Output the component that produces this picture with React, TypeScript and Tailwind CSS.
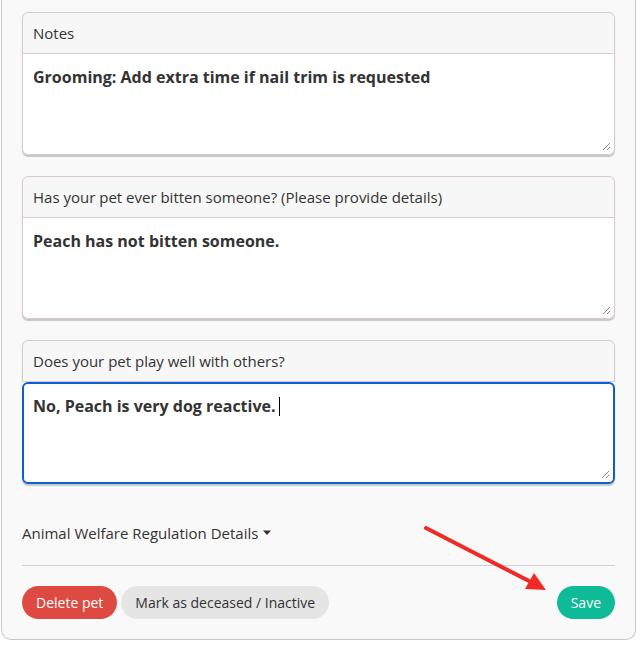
import React from "react";

type NoteFieldTypes = {
  label: string;
  value: string;
  focused?: boolean;
};

const ResizeGrip = () => (
  <svg width="9" height="9" viewBox="0 0 9 9" className="absolute bottom-[3px] right-[3px]">
    <path d="M1 8 L8 1 M5 8 L8 5" stroke="#8a8a8a" strokeWidth="1" />
  </svg>
);

const NoteField = ({ label, value, focused }: NoteFieldTypes) => {
  return (
    <div className="rounded-[6px] shadow-[0_2px_1px_rgba(0,0,0,0.2)]">
      <div className="h-[42px] flex items-center px-[10px] bg-[#f7f7f7] border border-[#dacbcb] rounded-t-[6px] text-[15px] text-[#333]">
        {label}
      </div>
      <div
        className={
          focused
            ? "relative h-[102px] bg-white border-2 border-[#0b5fd1] rounded-[6px] px-[9px] pt-[10px] text-[16px] font-bold text-[#333]"
            : "relative h-[101px] bg-white border border-t-0 border-[#dacbcb] rounded-b-[6px] px-[10px] pt-[11px] text-[16px] font-bold text-[#333]"
        }
      >
        <span>{value}</span>
        {focused && <span className="inline-block w-px h-[19px] bg-black align-[-4px] ml-[3px]" />}
        <ResizeGrip />
      </div>
    </div>
  );
};

const App = () => {
  return (
    <div className="w-[640px] h-[652px] bg-white" style={{ fontFamily: '"Open Sans", sans-serif' }}>
      <div className="relative ml-[1px] w-[635px] bg-[#f9f9f9] border border-t-0 border-[#c5cad1] rounded-b-[10px] px-5 pt-[12px] pb-[20px]">
        <div className="flex flex-col gap-[21px]">
          <NoteField label="Notes" value="Grooming: Add extra time if nail trim is requested" />
          <NoteField label="Has your pet ever bitten someone? (Please provide details)" value="Peach has not bitten someone." />
          <NoteField label="Does your pet play well with others?" value="No, Peach is very dog reactive." focused />
        </div>

        <div className="mt-[38px] flex items-center text-[15px] text-[#333]">
          Animal Welfare Regulation Details
          <svg width="10" height="6" viewBox="0 0 10 6" className="ml-[4px]">
            <path d="M1 0.5 L9 0.5 L5 5 Z" fill="#333" />
          </svg>
        </div>

        <div className="mt-[20px] border-t border-[#cfd2d6]" />

        <div className="mt-[20px] flex items-center">
          <button className="h-[33px] px-[14px] rounded-full bg-[#de4a41] text-white text-[14px]">Delete pet</button>
          <button className="ml-[4px] h-[33px] px-[14px] rounded-full bg-[#e5e5e5] text-[#333] text-[14px]">
            Mark as deceased / Inactive
          </button>
          <button className="ml-auto h-[33px] px-[14px] rounded-full bg-[#0fba98] text-white text-[14px]">Save</button>
        </div>

        <svg width="140" height="80" viewBox="0 0 140 80" className="absolute left-[419px] top-[520px] pointer-events-none">
          <line x1="5" y1="8" x2="110" y2="62" stroke="#f02b25" strokeWidth="4" strokeLinecap="round" />
          <path d="M125 70 L104 69 L113 53 Z" fill="#f02b25" />
        </svg>
      </div>
    </div>
  );
};

export default App;
